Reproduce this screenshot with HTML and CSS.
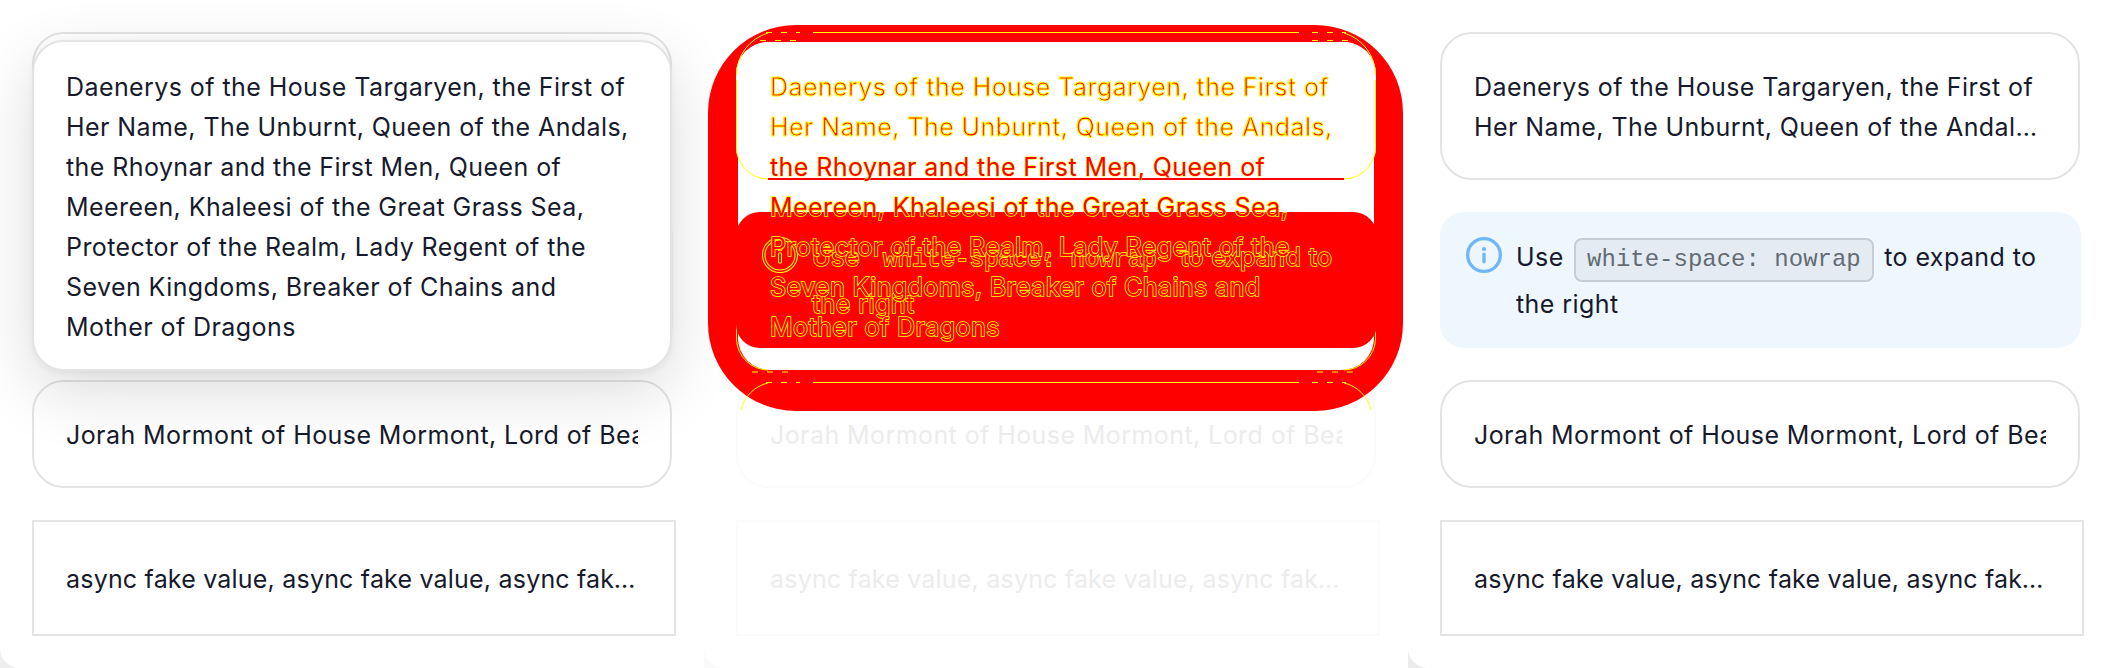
FILE: index.html
```html
<!DOCTYPE html>
<html lang="en">
	<head>
		<meta charset="UTF-8" />
		<title>Text overflow</title>
		<link rel="stylesheet" href="styles.css">
	</head>
	<body>
		<div class="panels">
			<div class="column column-first">
				<div class="panel">
					<div class="card"><div class="clamp">Daenerys of the House Targaryen, the First of Her Name, The Unburnt, Queen of the Andals, the Rhoynar and the First Men, Queen of Meereen, Khaleesi of the Great Grass Sea, Protector of the Realm, Lady Regent of the Seven Kingdoms, Breaker of Chains and Mother of Dragons</div></div>
					<div class="alert">
						<svg class="info-icon" viewBox="0 0 24 24"><circle cx="12" cy="12" r="10.900" fill="none" stroke="#6fb6fb" stroke-width="2.200"/><circle cx="12" cy="8" r="1.400" fill="#6fb6fb"/><path d="M12 11.500v5" stroke="#6fb6fb" stroke-width="2.200" stroke-linecap="round"/></svg>
						<div class="alert-text">Use <code class="chip">white-space: nowrap</code> to expand to the right</div>
					</div>
					<div class="card"><div class="clip">Jorah Mormont of House Mormont, Lord of Bear Island, Knight of the Queensguard</div></div>
					<div class="box"><div class="ellipsis">async fake value, async fake value, async fake value, async fake value</div></div>
					<div class="expanded">Daenerys of the House Targaryen, the First of Her Name, The Unburnt, Queen of the Andals, the Rhoynar and the First Men, Queen of Meereen, Khaleesi of the Great Grass Sea, Protector of the Realm, Lady Regent of the Seven Kingdoms, Breaker of Chains and Mother of Dragons</div>
				</div>
			</div>

			<div class="column column-middle">
				<div class="panel panel-diff">
					<div class="card card-empty"></div>
					<div class="alert alert-diff">
						<svg class="info-icon" viewBox="0 0 24 24" fill="none" stroke="#ff0" stroke-width="0.7"><circle cx="12" cy="12" r="11.700"/><circle cx="12" cy="12" r="10"/><circle cx="12" cy="8" r="1.300"/><rect x="11" y="10.500" width="2" height="7" rx="1"/></svg>
						<div class="alert-text">Use <code class="chip">white-space: nowrap</code> to expand to the right</div>
					</div>
					<div class="card card-ghost"><div class="clip">Jorah Mormont of House Mormont, Lord of Bear Island, Knight of the Queensguard</div></div>
					<div class="box box-ghost"><div class="ellipsis">async fake value, async fake value, async fake value, async fake value</div></div>

					<svg class="diff-mask" viewBox="708 25 695 386">
						<rect x="708" y="25" width="695" height="386" rx="88" fill="#f00"/>
						<rect x="738" y="42" width="636" height="328" rx="32" fill="#fff"/>
						<rect x="736" y="42" width="640" height="137" rx="32" fill="#fff"/>
						<path d="M768 179H1344" stroke="#f00" stroke-width="2"/>
						<g fill="none" stroke="#ff0">
							<path d="M813 32.500H1299"/>
							<path d="M766 32.500H800M1312 32.500H1346M760 40.500H800M1312 40.500H1352" stroke-dasharray="6 9"/>
							<path d="M736.500 75A44 44 0 0 1 768 33"/>
							<path d="M1375.500 75A44 44 0 0 0 1344 33"/>
							<path d="M736.500 80V148A32 32 0 0 0 768 179"/>
							<path d="M1375.500 80V148A32 32 0 0 1 1344 179"/>
							<path d="M736.500 305V340A32 32 0 0 0 768 370"/>
							<path d="M1375.500 305V340A32 32 0 0 1 1344 370"/>
							<path d="M813 382.500H1299"/>
							<path d="M766 382.500H800M1312 382.500H1346M752 372H795M1317 372H1360" stroke-dasharray="6 9"/>
							<path d="M741 410A36 36 0 0 1 768 383"/>
							<path d="M1371 410A36 36 0 0 0 1344 383"/>
						</g>
					</svg>

					<div class="expanded-diff"><span class="mixed">Daenerys of the House Targaryen, the First of Her Name, The Unburnt, Queen of the Andals,</span> <span class="solid">the Rhoynar and the First Men, Queen of</span> Meereen, Khaleesi of the Great Grass Sea, Protector of the Realm, Lady Regent of the Seven Kingdoms, Breaker of Chains and Mother of Dragons</div>
				</div>
			</div>

			<div class="column column-last">
				<div class="panel">
					<div class="card"><div class="clamp">Daenerys of the House Targaryen, the First of Her Name, The Unburnt, Queen of the Andals, the Rhoynar and the First Men, Queen of Meereen, Khaleesi of the Great Grass Sea, Protector of the Realm, Lady Regent of the Seven Kingdoms, Breaker of Chains and Mother of Dragons</div></div>
					<div class="alert">
						<svg class="info-icon" viewBox="0 0 24 24"><circle cx="12" cy="12" r="10.900" fill="none" stroke="#6fb6fb" stroke-width="2.200"/><circle cx="12" cy="8" r="1.400" fill="#6fb6fb"/><path d="M12 11.500v5" stroke="#6fb6fb" stroke-width="2.200" stroke-linecap="round"/></svg>
						<div class="alert-text">Use <code class="chip">white-space: nowrap</code> to expand to the right</div>
					</div>
					<div class="card"><div class="clip">Jorah Mormont of House Mormont, Lord of Bear Island, Knight of the Queensguard</div></div>
					<div class="box"><div class="ellipsis">async fake value, async fake value, async fake value, async fake value</div></div>
				</div>
			</div>
		</div>
	</body>
</html>
```

FILE: styles.css
```css
body {
	margin: 0;
	overflow: hidden;
	background: #fff;
	font-family: 'Inter', 'Noto Sans', sans-serif;
	font-size: 25px;
	letter-spacing: 0.42px;
	line-height: 40px;
	color: #171a2c;
}

.panels {
	display: grid;
	grid-template-columns: repeat(3, 704px);
	height: 668px;
}

.column-first {
	background: #eeeeee;
}

.column-middle {
	position: relative;
	z-index: 1;
	background: #fafafa;
}

.column-last {
	position: relative;
	z-index: 1;
	background: #ececec;
}

.panel {
	position: relative;
	box-sizing: border-box;
	height: 668px;
	padding: 32px;
	display: flex;
	flex-direction: column;
	gap: 32px;
	background: #fff;
	border-bottom-left-radius: 20px;
}

.card {
	box-sizing: border-box;
	width: 640px;
	padding: 33px 32px 31px;
	border: 2px solid #e4e4e4;
	border-radius: 32px;
}

.clamp {
	display: -webkit-box;
	-webkit-box-orient: vertical;
	-webkit-line-clamp: 2;
	overflow: hidden;
}

.clip {
	white-space: nowrap;
	overflow: hidden;
}

.box {
	box-sizing: border-box;
	width: 644px;
	padding: 37px 32px 35px;
	border: 2px solid #e4e4e4;
	letter-spacing: 0.2px;
}

.ellipsis {
	white-space: nowrap;
	overflow: hidden;
	text-overflow: ellipsis;
}

.alert {
	box-sizing: border-box;
	width: 641px;
	padding: 24px 26px;
	display: flex;
	gap: 14px;
	background: #eef6fe;
	border-radius: 24px;
}

.info-icon {
	flex: none;
	width: 36px;
	height: 36px;
	margin-top: 1px;
}

.alert-text {
	flex: 1;
}

.chip {
	display: inline-block;
	margin: 2px 3px;
	padding: 0 11px;
	border: 2px solid #c6cdd6;
	border-radius: 8px;
	background: #e4ebf3;
	color: #636b74;
	font-family: 'Liberation Mono', monospace;
	font-size: 24px;
	letter-spacing: 0;
	line-height: 40px;
}

.expanded {
	position: absolute;
	top: 40px;
	left: 32px;
	z-index: 2;
	box-sizing: border-box;
	width: 640px;
	padding: 25px 32px 22px;
	background: #fff;
	border: 2px solid #e4e4e4;
	border-radius: 32px;
	box-shadow: 0 20px 64px rgba(0, 0, 0, 0.14), 0 2px 6px rgba(0, 0, 0, 0.05);
}

/* middle column is the diff of the other two */
.card-empty {
	height: 148px;
}

.card-ghost,
.box-ghost {
	border-color: #fbfbfb;
	color: #ececec;
}

.diff-mask {
	position: absolute;
	top: 25px;
	left: 4px;
	z-index: 1;
	width: 695px;
	height: 386px;
}

.alert-diff {
	position: relative;
	z-index: 2;
	background: #f00;
}

.alert-diff .alert-text,
.expanded-diff {
	color: #f00;
	-webkit-text-stroke: 1.6px #ff0;
	paint-order: stroke fill;
}

.alert-diff .chip {
	border-color: #f00;
	background: #f00;
	color: #f00;
}

.expanded-diff {
	position: absolute;
	top: 67px;
	left: 66px;
	z-index: 3;
	width: 572px;
}

.mixed {
	-webkit-text-stroke: 0.9px #ff0;
	paint-order: normal;
}

.solid {
	-webkit-text-stroke: 0.8px #ff0;
}
```
